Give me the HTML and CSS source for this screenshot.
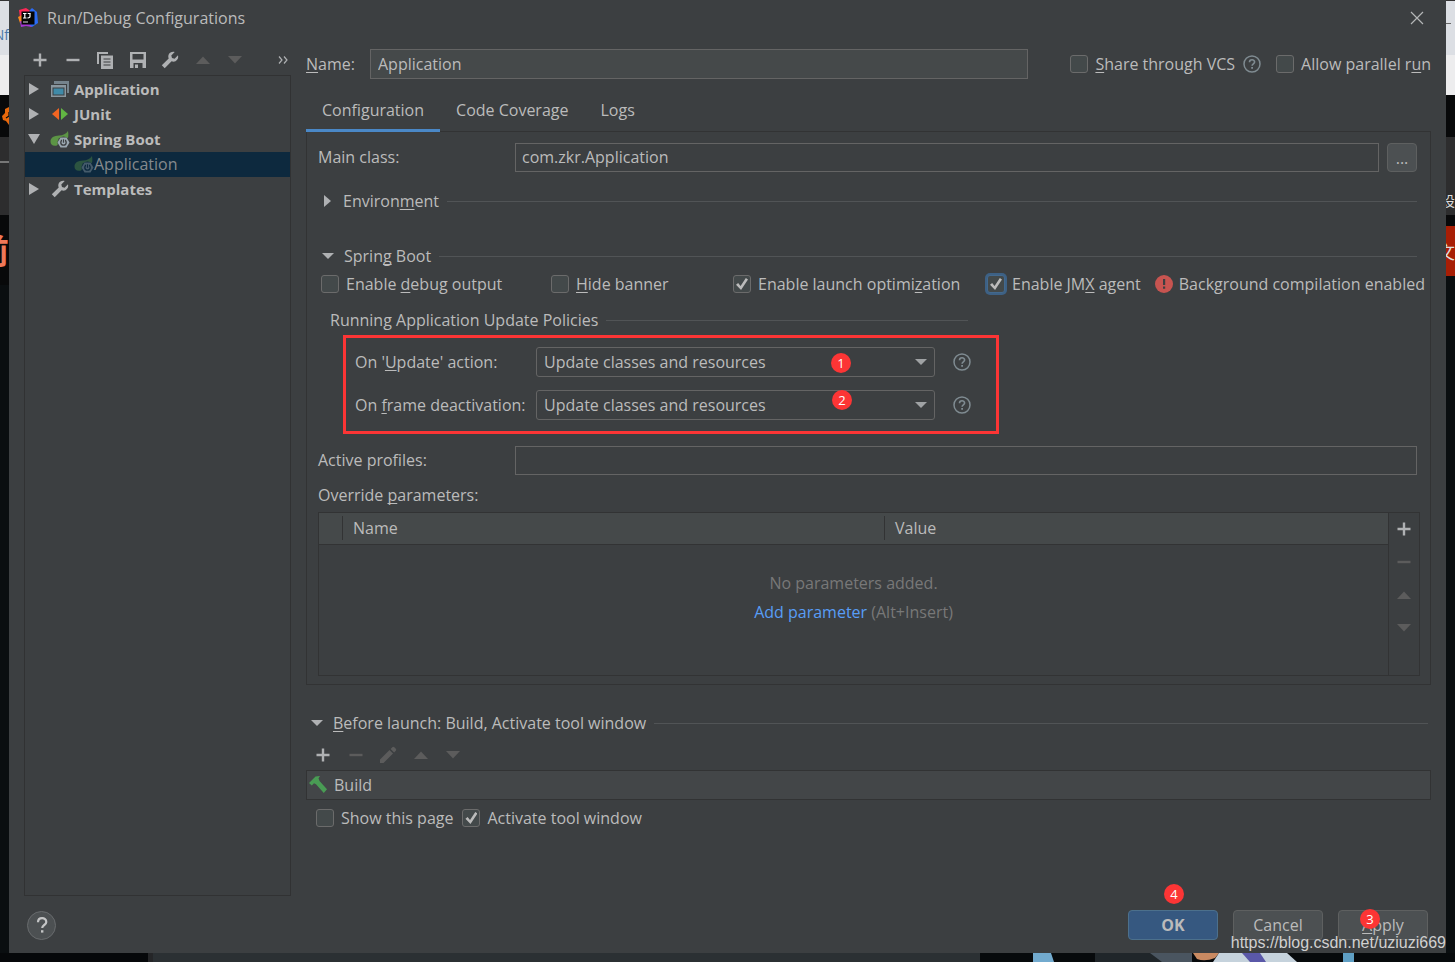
FILE: index.html
```html
<!DOCTYPE html>
<html lang="en">
<head>
<meta charset="utf-8">
<title>Run/Debug Configurations</title>
<link rel="stylesheet" href="styles.css">
</head>
<body>
<svg class="defs" aria-hidden="true">
  <symbol id="plus" viewBox="0 0 18 18"><path d="M9 2.5v13M2.5 9h13" stroke="currentColor" stroke-width="2.4" fill="none"/></symbol>
  <symbol id="minus" viewBox="0 0 18 18"><path d="M2.5 9h13" stroke="currentColor" stroke-width="2.4" fill="none"/></symbol>
  <symbol id="up" viewBox="0 0 18 18"><path d="M2 13 9 5.5 16 13z" fill="currentColor"/></symbol>
  <symbol id="down" viewBox="0 0 18 18"><path d="M2 5 9 12.5 16 5z" fill="currentColor"/></symbol>
  <symbol id="caret" viewBox="0 0 12 12"><path d="M0 3h12L6 9z" fill="currentColor"/></symbol>
  <symbol id="caret-right" viewBox="0 0 12 12"><path d="M3 0v12l7-6z" fill="currentColor"/></symbol>
  <symbol id="tree-right" viewBox="0 0 12 12"><path d="M1 0v12l10-6z" fill="currentColor"/></symbol>
  <symbol id="tree-down" viewBox="0 0 12 12"><path d="M0 1h12L6 11z" fill="currentColor"/></symbol>
  <symbol id="wrench" viewBox="0 0 18 18"><path d="M17 4.3 13.6 7.7 11 7 10.3 4.4 13.7 1C11.300 0.300 8.700 1.300 7.700 3.500 7.100 4.900 7.200 6.200 7.700 7.400L0.800 14.300 3.700 17.200 10.600 10.300C11.900 10.800 13.300 10.800 14.500 10.200 16.700 9.100 17.700 6.600 17 4.300z" fill="currentColor"/></symbol>
  <symbol id="boot" viewBox="0 0 20 18">
    <path d="M18 1c.8 4 .4 7.500-1.500 10.200H10L7 15.500C2.500 16.300.5 14.600.5 11.500.5 7.500 4 5.800 9 5.500c4-.2 7-1.500 9-4.500z" fill="#5c9445"/>
    <circle cx="13.500" cy="12.500" r="6" fill="var(--row-bg)"/>
    <path d="M10.500 7.500h6l3 5-3 5h-6l-3-5z" fill="#9aa7b0"/>
    <circle cx="13.500" cy="12.500" r="2.700" fill="none" stroke="var(--row-bg)" stroke-width="1.300"/>
    <path d="M13.500 8.700v4" stroke="#9aa7b0" stroke-width="3"/><path d="M13.500 9.300v3.400" stroke="var(--row-bg)" stroke-width="1.200"/>
  </symbol>
  <symbol id="help" viewBox="0 0 18 18"><circle cx="9" cy="9" r="8" fill="none" stroke="#7f8b91" stroke-width="1.500"/><path d="M6.500 7.200C6.500 4 11.600 4 11.600 7c0 1.800-2.500 1.900-2.500 3.700" fill="none" stroke="#7f8b91" stroke-width="1.600"/><path d="M8.200 12h1.800v1.800H8.200z" fill="#7f8b91"/></symbol>
</svg>

<div class="screen">
  <div class="edge edge-left" aria-hidden="true">
    <div class="seg tabstrip"><span class="clip-text">Nf</span></div>
    <div class="seg address"></div>
    <div class="seg black short"><svg class="edge-icon" viewBox="0 0 9 20"><path d="M9 1 5 3l0 4-3 3 1 4 3 1 3 4z" fill="#e8680c"/><path d="M9 6v4l-3 2" fill="none" stroke="#08090a" stroke-width="1.200"/></svg></div>
    <div class="seg grey"><span class="rule"></span></div>
    <div class="seg black banner"><span class="coral">前</span></div>
    <div class="seg rest"></div>
  </div>

  <main class="dialog">
    <header class="titlebar">
      <svg class="logo" viewBox="0 0 20 20">
        <path d="M1 2 8 0l6 4-6 8L2 10z" fill="#fe2857"/><path d="M0 9l4-2 3 9-5-1z" fill="#fc8a1d"/><path d="M12 2l2-2 5 4 1 11-6 4-7-3z" fill="#2b6cf5"/><path d="M2 13l8 2 4 4-6-1-5 1z" fill="#a637d4"/>
        <path d="M3.500 3.500h13v13h-13z" fill="#050505"/>
        <path d="M5 5.500h3.500M6.800 5.500v4.500M5 10h3.500M9.700 5.500h3M12 5v3.500q0 1.500-2.500 1.300" stroke="#fff" stroke-width="1.200" fill="none"/><path d="M5 14h5" stroke="#ddd" stroke-width="1"/>
      </svg>
      <h1 class="title">Run/Debug Configurations</h1>
      <button class="icon-btn close" aria-label="Close"><svg class="i14" viewBox="0 0 14 14"><path d="M1 1l12 12M13 1 1 13" stroke="#b4b6b7" stroke-width="1.200"/></svg></button>
    </header>

    <div class="content">
      <aside class="sidebar">
        <div class="toolbar side-tools">
          <div class="tool-group">
            <button class="icon-btn" aria-label="Add"><svg class="i18"><use href="#plus"/></svg></button>
            <button class="icon-btn" aria-label="Remove"><svg class="i18"><use href="#minus"/></svg></button>
            <button class="icon-btn" aria-label="Copy"><svg class="i18" viewBox="0 0 18 18"><path d="M1 13V1h11v2H3v10z" fill="currentColor"/><path d="M5 4.500h12V18H5z" fill="currentColor"/><path d="M7.500 8h7M7.500 11h7M7.500 14h7" stroke="#3c3f41" stroke-width="1.200"/></svg></button>
            <button class="icon-btn" aria-label="Save"><svg class="i18" viewBox="0 0 18 18"><path d="M1 1h16v16H1z" fill="currentColor"/><path d="M3.500 3h11v5.500h-11zM4.500 12h9v5h-9z" fill="#3c3f41"/><path d="M6 13.500h3V17H6z" fill="currentColor"/></svg></button>
            <button class="icon-btn" aria-label="Edit templates"><svg class="i18"><use href="#wrench"/></svg></button>
            <button class="icon-btn dim" aria-label="Move up"><svg class="i18"><use href="#up"/></svg></button>
            <button class="icon-btn dim" aria-label="Move down"><svg class="i18"><use href="#down"/></svg></button>
          </div>
          <button class="icon-btn more" aria-label="More"><svg class="i10" viewBox="0 0 10 10"><path d="M1 1.500 4 5 1 8.500M6 1.500 9 5 6 8.500" fill="none" stroke="currentColor" stroke-width="1.200"/></svg></button>
        </div>
        <ul class="tree">
          <li class="node"><svg class="i12"><use href="#tree-right"/></svg><svg class="node-icon" viewBox="0 0 20 18"><path d="M4 1h15v12h-2V4H4z" fill="#76848d"/><path d="M1 5h15v12H1z" fill="#8a979f"/><path d="M2.500 7.500h12v8h-12z" fill="#3c3f41"/><path d="M3.500 8.500h10v6h-10z" fill="#3f8aa8"/></svg>Application</li>
          <li class="node"><svg class="i12"><use href="#tree-right"/></svg><svg class="node-icon" viewBox="0 0 20 18"><path d="M9 3v12L2 9z" fill="#f26522"/><path d="M11 3v12l7-6z" fill="#62b543"/></svg>JUnit</li>
          <li class="node"><svg class="i12"><use href="#tree-down"/></svg><svg class="node-icon"><use href="#boot"/></svg>Spring Boot</li>
          <li class="node child"><svg class="node-icon faded"><use href="#boot"/></svg>Application</li>
          <li class="node"><svg class="i12"><use href="#tree-right"/></svg><svg class="node-icon"><use href="#wrench"/></svg>Templates</li>
        </ul>
      </aside>

      <section class="main">
        <div class="name-row">
          <label class="name-label" for="name"><u>N</u>ame:</label>
          <input class="field name-field" id="name" type="text" value="Application">
          <label class="check"><input type="checkbox"><span><u>S</u>hare through VCS</span></label>
          <button class="icon-btn share-help" aria-label="Help on sharing"><svg class="i18"><use href="#help"/></svg></button>
          <label class="check"><input type="checkbox"><span>Allow parallel r<u>u</u>n</span></label>
        </div>

        <nav class="tabs">
          <button class="tab active">Configuration</button>
          <button class="tab">Code Coverage</button>
          <button class="tab">Logs</button>
        </nav>

        <div class="panel">
          <div class="form-row">
            <label class="form-label" for="cls">Main class:</label>
            <input class="field" id="cls" type="text" value="com.zkr.Application">
            <button class="browse" aria-label="Browse">...</button>
          </div>
          <h2 class="section env"><svg class="i12"><use href="#caret-right"/></svg><span>Environ<u>m</u>ent</span></h2>
          <h2 class="section boot-head"><svg class="i12"><use href="#caret"/></svg><span>Sprin<u>g</u> Boot</span></h2>
          <div class="options">
            <label class="check"><input type="checkbox"><span>Enable <u>d</u>ebug output</span></label>
            <label class="check"><input type="checkbox"><span><u>H</u>ide banner</span></label>
            <label class="check"><input type="checkbox" checked><span>Enable launch optimi<u>z</u>ation</span></label>
            <label class="check focused"><input type="checkbox" checked><span>Enable JM<u>X</u> agent</span></label>
            <p class="warning"><svg class="i18" viewBox="0 0 18 18"><circle cx="9" cy="9" r="9" fill="#c75450"/><path d="M8 4h2.200v6H8zM8 11.500h2.200v2.200H8z" fill="#3c3f41"/></svg>Background compilation enabled</p>
          </div>
          <h3 class="section policies">Running Application Update Policies</h3>
          <div class="highlight">
            <label for="upd">On '<u>U</u>pdate' action:</label>
            <div class="combo"><select id="upd"><option>Update classes and resources</option></select><svg class="i12 arrow"><use href="#caret"/></svg><span class="badge b1">1</span></div>
            <button class="icon-btn" aria-label="Help on update action"><svg class="i18"><use href="#help"/></svg></button>
            <label for="frm">On <u>f</u>rame deactivation:</label>
            <div class="combo"><select id="frm"><option>Update classes and resources</option></select><svg class="i12 arrow"><use href="#caret"/></svg><span class="badge b2">2</span></div>
            <button class="icon-btn" aria-label="Help on frame deactivation"><svg class="i18"><use href="#help"/></svg></button>
          </div>
          <div class="form-row profiles">
            <label class="form-label" for="prof">Active profiles:</label>
            <input class="field" id="prof" type="text">
          </div>
          <p class="override">Override <u>p</u>arameters:</p>
          <div class="params">
            <div class="params-body">
              <table class="grid">
                <thead><tr><th class="col-tick"></th><th class="col-name"><span>Name</span></th><th><span>Value</span></th></tr></thead>
              </table>
              <div class="empty">
                <p>No parameters added.</p>
                <p><a href="#">Add parameter</a> (Alt+Insert)</p>
              </div>
            </div>
            <div class="params-tools">
              <button class="icon-btn" aria-label="Add parameter row"><svg class="i18"><use href="#plus"/></svg></button>
              <button class="icon-btn dim" aria-label="Remove parameter"><svg class="i18"><use href="#minus"/></svg></button>
              <button class="icon-btn dim" aria-label="Parameter up"><svg class="i18"><use href="#up"/></svg></button>
              <button class="icon-btn dim" aria-label="Parameter down"><svg class="i18"><use href="#down"/></svg></button>
            </div>
          </div>
        </div>

        <h2 class="section before"><svg class="i12"><use href="#caret"/></svg><span><u>B</u>efore launch: Build, Activate tool window</span></h2>
        <div class="toolbar task-tools">
          <button class="icon-btn" aria-label="Add task"><svg class="i18"><use href="#plus"/></svg></button>
          <button class="icon-btn dim" aria-label="Remove task"><svg class="i18"><use href="#minus"/></svg></button>
          <button class="icon-btn dim" aria-label="Edit task"><svg class="i18" viewBox="0 0 18 18"><path d="M1 13.500 10.500 4 14 7.500 4.500 17H1zM11.600 2.900 13.300 1.200q1-.9 2 0l1.500 1.500q.9 1 0 2L15.100 6.400z" fill="currentColor"/></svg></button>
          <button class="icon-btn dim" aria-label="Task up"><svg class="i18"><use href="#up"/></svg></button>
          <button class="icon-btn dim" aria-label="Task down"><svg class="i18"><use href="#down"/></svg></button>
        </div>
        <ul class="tasks"><li><svg class="i20" viewBox="0 0 20 20"><path d="M1 8 7.500 1.500 12 1l-1.500 2.300L11.500 6 19 14.300 15.800 18 8 9.300 6 8.300 3.800 10.500z" fill="#499c54"/></svg>Build</li></ul>
        <div class="bottom-checks">
          <label class="check"><input type="checkbox"><span>Show this page</span></label>
          <label class="check"><input type="checkbox" checked><span>Activate tool window</span></label>
        </div>
      </section>
    </div>

    <footer class="footer">
      <button class="round-help" aria-label="Help"><svg class="i18" viewBox="0 0 18 18"><path d="M5 6.300C5 .800 13.300 1 13.300 6c0 3-4.100 3-4.100 6" fill="none" stroke="#c4c5c6" stroke-width="2.200"/><path d="M8 14.200h2.400v2.400H8z" fill="#c4c5c6"/></svg></button>
      <div class="actions">
        <div class="action"><button class="btn primary">OK</button><span class="badge b4">4</span></div>
        <div class="action"><button class="btn">Cancel</button></div>
        <div class="action"><button class="btn"><u>A</u>pply</button><span class="badge b3">3</span></div>
      </div>
    </footer>
    <span class="watermark">https://blog.csdn.net/uziuzi669</span>
  </main>

  <div class="edge edge-right" aria-hidden="true">
    <div class="seg tabstrip"><span class="dash"></span></div>
    <div class="seg address"></div>
    <div class="seg black short"></div>
    <div class="seg grey"><span class="side-text">设</span></div>
    <div class="seg black gap"></div>
    <div class="seg red"><span class="side-text big">文</span></div>
    <div class="seg rest"></div>
  </div>

  <div class="taskline" aria-hidden="true">
    <div class="tl-black"></div>
    <div class="tl-grey"></div>
    <svg class="tl-pic" viewBox="0 0 475 9" preserveAspectRatio="none">
      <path d="M0 0h475v9H0z" fill="#070a0c"/><path d="M53 0h18l3 9H53z" fill="#72aace"/><path d="M115 0h80l18 9h-98z" fill="#20262a"/><path d="M170 0h42v9h-30z" fill="#4a5560"/><path d="M213 0h26l-4 5q-10 4-18 1z" fill="#c98a62"/><path d="M239 0h68l10 9h-84z" fill="#c5d2dc"/><path d="M262 0h18l6 9h-16z" fill="#5a58a8"/><path d="M363 0h11v9h-11z" fill="#5f9fc4"/>
    </svg>
  </div>
</div>
</body>
</html>
```
FILE: styles.css
```css
* { box-sizing: border-box; }
body { margin: 0; background: #0a0e10; color: #bbbbbb; font: 16px/24px "Open Sans", "Noto Sans", "Noto Sans CJK SC", sans-serif; }
h1, h2, h3, p, ul { margin: 0; padding: 0; font-size: 16px; font-weight: 400; list-style: none; }
button, input, select { font: inherit; color: inherit; }
u { text-decoration: underline; text-underline-offset: 2px; text-decoration-skip-ink: none; }
svg { display: block; flex: none; }
.defs { position: absolute; width: 0; height: 0; }
.i10 { width: 10px; height: 10px; }
.i12 { width: 12px; height: 12px; }
.i14 { width: 14px; height: 14px; }
.i18 { width: 18px; height: 18px; }
.i20 { width: 20px; height: 20px; }

.screen { display: grid; grid-template-columns: 9px minmax(0, 1fr) 9px; grid-template-rows: 1fr 9px; min-height: 100vh; }

/* desktop showing around the dialog */
.edge { display: flex; flex-direction: column; overflow: hidden; border-top: 1px solid #333; }
.seg { flex: none; overflow: hidden; white-space: nowrap; }
.tabstrip { height: 54px; background: #dcdfe4; padding-top: 22px; }
.address { height: 40px; background: #ededee; }
.short { height: 42px; padding-top: 11px; }
.black { background: #08090a; }
.grey { height: 78px; background: #2d2d2e; display: flex; align-items: center; }
.edge-left .grey { padding-bottom: 28px; }
.banner { height: 70px; display: flex; align-items: center; }
.gap { height: 11px; }
.red { height: 50px; background: #a81e05; display: flex; align-items: center; }
.rest { flex: 1; background: #0a0e10; }
.clip-text { color: #4a78a8; font-size: 14px; display: flex; justify-content: flex-end; }
.edge-icon { width: 9px; height: 20px; }
.rule { width: 9px; height: 2px; background: #777; }
.coral { display: flex; justify-content: flex-end; width: 9px; color: #f07858; font: 700 34px/40px "Noto Sans CJK SC", sans-serif; }
.dash { display: block; width: 5px; height: 1px; background: #666; }
.edge-right .grey { align-items: flex-end; padding-bottom: 3px; }
.side-text { color: #ddd; font: 14px/24px "Noto Sans CJK SC", sans-serif; }
.edge-right .side-text { display: flex; justify-content: flex-end; width: 9px; }
.edge-right .big { font-size: 18px; }
.taskline { grid-column: 1 / -1; display: flex; }
.tl-black { width: 148px; background: #06080a; }
.tl-grey { flex: 1; background: #2b3033; border-left: 5px solid #252628; }
.tl-pic { width: 475px; height: 9px; }

.dialog { position: relative; display: flex; flex-direction: column; background: #3c3f41; }
.titlebar { display: flex; align-items: center; height: 36px; padding: 0 22px 0 9px; }
.logo { width: 20px; height: 20px; margin-right: 9px; }
.close { margin-left: auto; }
.icon-btn { display: flex; align-items: center; justify-content: center; border: 0; padding: 0; background: none; color: #afb1b3; }
.dim { color: #5c5c5c; }

.content { flex: 1; display: flex; gap: 15px; padding: 11px 15px 0; }
.sidebar { width: 267px; flex: none; display: flex; flex-direction: column; }
.toolbar { display: flex; align-items: center; justify-content: space-between; height: 24px; }
.side-tools { padding: 1px 3px 0 7px; margin-bottom: 4px; }
.tool-group { display: flex; justify-content: space-between; width: 213px; }
.tree { flex: 1; border: 1px solid #313233; padding-top: 1px; }
.node { --row-bg: #3c3f41; display: flex; align-items: center; height: 25px; padding: 0 0 1px 3px; font-size: 15px; font-weight: 700; }
.node > .i12 { color: #afb1b3; }
.node-icon { width: 20px; height: 18px; margin: 0 4px 0 10px; color: #afb1b3; }
.child { --row-bg: #0d293e; background: #0d293e; color: #85898d; font-size: 16px; font-weight: 400; padding-left: 39px; }
.child .node-icon { margin-right: 0; }
.faded { opacity: .4; }

.main { flex: 1; min-width: 0; }
.name-row { display: flex; align-items: center; margin-top: 2px; height: 30px; }
.name-label { width: 64px; flex: none; }
.field { flex: 1; min-width: 0; height: 29px; padding: 0 6px 1px; border: 1px solid #646464; background: #3c3f41; border-radius: 0; outline: 0; }
.name-field { flex: 0 1 658px; height: 30px; padding: 0 7px 1px; background: #45494a; margin-right: auto; }
.share-help { margin: 0 15px 0 8px; }
.check { display: flex; align-items: center; gap: 7px; white-space: nowrap; }
.check input { appearance: none; flex: none; width: 18px; height: 18px; margin: 0; border: 1px solid #6b6b6b; border-radius: 3px; background: #43494a; display: grid; place-items: center; }
.check input:checked::before { content: ""; width: 12px; height: 12px; background: #bbbbbb; clip-path: polygon(0 56%, 18% 42%, 38% 66%, 82% 0, 100% 12%, 42% 100%); }
.focused input { box-shadow: 0 0 0 2px #3d6185; border-color: #43698e; }

.tabs { display: flex; margin-top: 11px; height: 41px; }
.tab { border: 0; border-bottom: 3px solid transparent; background: none; padding: 0 16px; position: relative; height: 42px; }
.active { border-bottom-color: #4a88c7; }

.panel { border: 1px solid #323334; padding: 11px 10px 8px 11px; }
.form-row { display: flex; margin-right: 3px; align-items: center; }
.form-label { width: 197px; flex: none; padding-bottom: 1px; }
.browse { width: 30px; height: 29px; margin-left: 8px; border: 1px solid #5e6060; border-radius: 4px; background: #4c5052; padding: 0; }
.section { display: flex; align-items: center; height: 24px; gap: 10px; margin-right: 3px; }
.section::after { content: ""; flex: 1; height: 1px; background: #515456; margin-left: -2px; }
.section .i12 { color: #afb1b3; }
.env { margin-top: 17px; padding-left: 3px; }
.boot-head { margin-top: 31px; padding-left: 4px; }
.options { display: grid; grid-template-columns: 230px 182px 254px auto 1fr; margin-top: 4px; padding-left: 3px; }
.warning { display: flex; align-items: center; gap: 6px; margin-left: 14px; white-space: nowrap; }
.policies { margin-top: 12px; padding-left: 12px; width: 650px; }
.highlight { display: grid; grid-template-columns: 181px 399px 18px; row-gap: 13px; align-items: center; width: 656px; margin: 3px 0 0 25px; padding: 9px 9px 11px; border: 3px solid #fc3535; }
.highlight .icon-btn { margin-left: 18px; width: 18px; }
.combo { position: relative; }
.combo select { display: block; appearance: none; width: 100%; height: 30px; padding: 0 7px; border: 1px solid #646464; border-radius: 3px; background: #3c3f41; outline: 0; }
.arrow { position: absolute; right: 8px; top: 9px; color: #9fa2a4; pointer-events: none; }
.badge { position: absolute; width: 20px; height: 20px; border-radius: 50%; background: #fc3535; color: #fff; font-size: 13px; line-height: 20px; text-align: center; }
.b1 { left: 295px; top: 6px; }
.b2 { left: 296px; top: 0; }
.b3 { left: 22px; top: -1px; }
.b4 { left: 36px; top: -26px; }
.profiles { margin-top: 12px; }
.override { margin-top: 8px; }
.params { display: flex; margin-top: 5px; min-height: 164px; border: 1px solid #323334; }
.params-body { flex: 1; display: flex; flex-direction: column; }
.grid { width: 100%; border-collapse: collapse; table-layout: fixed; background: #45494a; }
.grid th { height: 31px; padding: 2px 0; text-align: left; font-weight: 400; border-bottom: 1px solid #323334; }
.grid th span { display: block; border-left: 1px solid #323334; padding-left: 10px; }
.col-tick { width: 23px; }
.col-name { width: 542px; }
.empty { flex: 1; padding-top: 26px; text-align: center; color: #787878; }
.empty p + p { margin-top: 5px; }
.empty a { color: #589df6; text-decoration: none; }
.params-tools { width: 31px; border-left: 1px solid #323334; display: flex; flex-direction: column; align-items: center; gap: 15px; padding-top: 7px; }

.before { margin-top: 26px; padding-left: 5px; }
.task-tools { margin-top: 8px; margin-left: 8px; width: 148px; }
.tasks { margin-top: 3px; border: 1px solid #323334; background: #434648; }
.tasks li { display: flex; align-items: center; gap: 6px; height: 28px; padding-left: 1px; }
.bottom-checks { display: flex; gap: 9px; margin-top: 6px; padding-left: 10px; }

.footer { display: flex; justify-content: space-between; align-items: center; padding: 14px 18px 13px; }
.round-help { width: 29px; height: 29px; border: 1px solid #686b6d; border-radius: 50%; background: #4c5052; padding: 0; display: grid; place-items: center; }
.actions { display: flex; gap: 15px; }
.action { position: relative; }
.btn { display: block; width: 90px; height: 30px; border: 1px solid #5e6060; border-radius: 4px; background: #4c5052; padding: 0; }
.primary { background: #365880; border-color: #4c708c; font-weight: 700; }
.watermark { position: absolute; right: 0; bottom: 0; color: #d0d0d0; font: 16px/20px "Liberation Sans", Arial, sans-serif; pointer-events: none; }
```
